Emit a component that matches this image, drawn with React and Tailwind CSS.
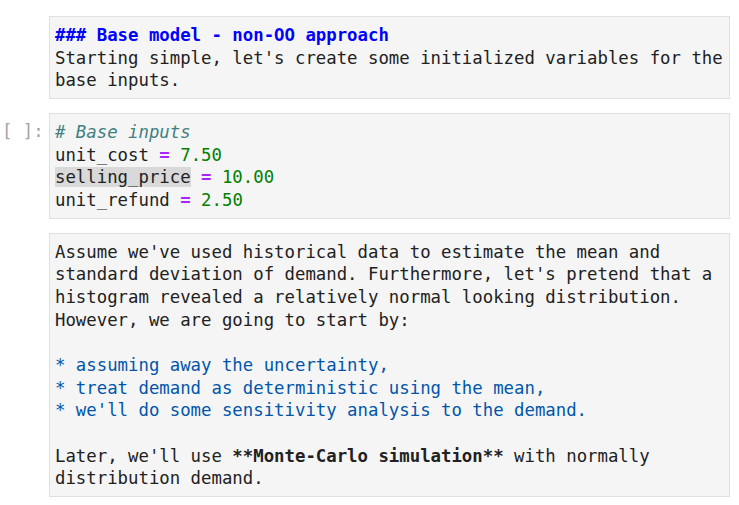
import React from 'react';

// Notebook-style cells: markdown source, code cell, markdown source
const mono = "font-['DejaVu_Sans_Mono',monospace]";

function Cell({ prompt, children }) {
  return (
    <div className="flex">
      <div className={`w-[49px] shrink-0 pt-[7px] pl-[2px] whitespace-pre text-[#a3a3a3] ${mono} text-[17.33px] leading-[22.67px]`}>
        {prompt}
      </div>
      <div
        className={`w-[681px] border border-[#e0e0e0] bg-[#f5f5f5] px-[5px] pt-[7px] pb-[6px] text-[#212121] ${mono} text-[17.33px] leading-[22.67px] whitespace-pre`}
      >
        {children}
      </div>
    </div>
  );
}

const Op = () => <span className="font-bold text-[#aa22ff]">=</span>;
const Num = ({ v }) => <span className="text-[#008000]">{v}</span>;

export default function App() {
  return (
    <div className="min-h-[505px] w-[739px] bg-white pt-[16px] flex flex-col gap-[14px]">
      <Cell>
        <div className="font-bold text-[#0000ff]">### Base model - non-OO approach</div>
        <div>Starting simple, let's create some initialized variables for the</div>
        <div>base inputs.</div>
      </Cell>

      <Cell prompt="[ ]:">
        <div className="italic text-[#408080]"># Base inputs</div>
        <div>unit_cost <Op /> <Num v="7.50" /></div>
        <div>
          <span className="bg-[#d9d9d9]">selling_price</span> <Op /> <Num v="10.00" />
        </div>
        <div>unit_refund <Op /> <Num v="2.50" /></div>
      </Cell>

      <Cell>
        <div>Assume we've used historical data to estimate the mean and</div>
        <div>standard deviation of demand. Furthermore, let's pretend that a</div>
        <div>histogram revealed a relatively normal looking distribution.</div>
        <div>However, we are going to start by:</div>
        <div>&nbsp;</div>
        <div className="text-[#0055aa]">* assuming away the uncertainty,</div>
        <div className="text-[#0055aa]">* treat demand as deterministic using the mean,</div>
        <div className="text-[#0055aa]">* we'll do some sensitivity analysis to the demand.</div>
        <div>&nbsp;</div>
        <div>
          Later, we'll use <span className="font-bold">**Monte-Carlo simulation**</span> with normally
        </div>
        <div>distribution demand.</div>
      </Cell>
    </div>
  );
}
